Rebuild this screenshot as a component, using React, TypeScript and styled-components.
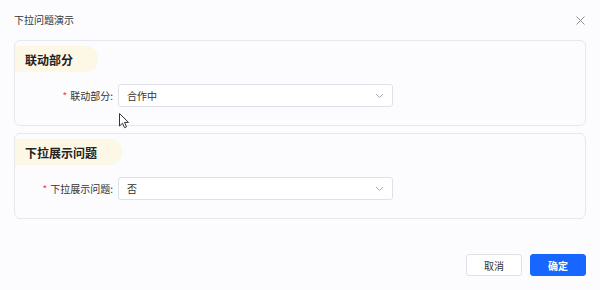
import { createGlobalStyle } from 'styled-components'
import styled from 'styled-components'
import { ReactNode } from 'react'

const GlobalStyle = createGlobalStyle`
  html, body {
    margin: 0;
    padding: 0;
    background: #fcfbfe;
  }
  body {
    font-family: "Noto Sans CJK SC", "Noto Sans", sans-serif;
    color: #333;
  }
`

const Dialog = styled.div`
  position: relative;
  width: 600px;
  height: 290px;
  display: flex;
  flex-direction: column;
  background: #fcfbfe;
`

const Header = styled.div`
  height: 40px;
  display: flex;
  align-items: center;
  justify-content: space-between;
  padding: 0 14px 0 14px;
  box-sizing: border-box;
`

const Title = styled.div`
  font-size: 10px;
  color: #333;
  line-height: 1;
`

const Close = styled.button`
  border: 0;
  background: none;
  padding: 0;
  width: 12px;
  height: 12px;
  display: flex;
  align-items: center;
  justify-content: center;
  color: #8f8f99;
`

const Body = styled.div`
  display: flex;
  flex-direction: column;
  gap: 7px;
  padding: 0 14px;
`

const Card = styled.section`
  border: 1px solid #e7e7ee;
  border-radius: 6px;
  height: 86px;
  box-sizing: border-box;
  padding-top: 5px;
  display: flex;
  flex-direction: column;
  gap: 12px;
`

const Pill = styled.div`
  align-self: flex-start;
  height: 26px;
  display: flex;
  align-items: center;
  padding: 0 25px 0 10px;
  background: #fdf7e6;
  border-radius: 0 13px 13px 0;
  font-size: 12px;
  font-weight: 700;
  color: #222;
`

const Row = styled.div`
  display: flex;
  align-items: center;
  gap: 5px;
`

const Label = styled.label`
  width: 98px;
  text-align: right;
  font-size: 10px;
  color: #333;
  &::before {
    content: '*';
    color: #f04134;
    margin-right: 3px;
  }
`

const Select = styled.div`
  width: 275px;
  height: 23px;
  box-sizing: border-box;
  border: 1px solid #dfe1e8;
  border-radius: 3px;
  background: #fff;
  display: flex;
  align-items: center;
  justify-content: space-between;
  padding: 0 8px 0 8px;
  font-size: 10px;
  color: #333;
`

const Footer = styled.div`
  margin-top: auto;
  height: 58px;
  display: flex;
  justify-content: flex-end;
  align-items: flex-start;
  gap: 8px;
  padding: 22px 14px 0 0;
  box-sizing: border-box;
`

const Button = styled.button<{ $primary?: boolean }>`
  width: 56px;
  height: 22px;
  border-radius: 3px;
  font-family: inherit;
  font-size: 10px;
  cursor: pointer;
  border: 1px solid ${({ $primary }) => ($primary ? '#1766ff' : '#dfe1e8')};
  background: ${({ $primary }) => ($primary ? '#1766ff' : '#fff')};
  color: ${({ $primary }) => ($primary ? '#fff' : '#333')};
  font-weight: ${({ $primary }) => ($primary ? 700 : 400)};
`

const Cursor = styled.svg`
  position: absolute;
  left: 119px;
  top: 113px;
`

function Chevron(): ReactNode {
  return (
    <svg width="9" height="6" viewBox="0 0 9 6">
      <path d="M1 1l3.5 3.5L8 1" fill="none" stroke="#a8abb3" strokeWidth="1" />
    </svg>
  )
}

function Field({ label, value }: { label: string; value: string }): ReactNode {
  return (
    <Row>
      <Label>{label}:</Label>
      <Select>
        <span>{value}</span>
        <Chevron />
      </Select>
    </Row>
  )
}

export default function App(): ReactNode {
  return (
    <>
      <GlobalStyle />
      <Dialog>
        <Header>
          <Title>下拉问题演示</Title>
          <Close>
            <svg width="9" height="9" viewBox="0 0 9 9">
              <path d="M0.5 0.5l8 8M8.5 0.5l-8 8" stroke="#8f8f99" strokeWidth="1" />
            </svg>
          </Close>
        </Header>
        <Body>
          <Card>
            <Pill>联动部分</Pill>
            <Field label="联动部分" value="合作中" />
          </Card>
          <Card>
            <Pill>下拉展示问题</Pill>
            <Field label="下拉展示问题" value="否" />
          </Card>
        </Body>
        <Footer>
          <Button>取消</Button>
          <Button $primary>确定</Button>
        </Footer>
        <Cursor width="11" height="16" viewBox="0 0 11 16">
          <path
            d="M0.5 0.5v12.5l3-2.8 2 4.5 2-0.9-2-4.4h4z"
            fill="#fff"
            stroke="#333"
            strokeWidth="1"
            strokeLinejoin="round"
          />
        </Cursor>
      </Dialog>
    </>
  )
}
